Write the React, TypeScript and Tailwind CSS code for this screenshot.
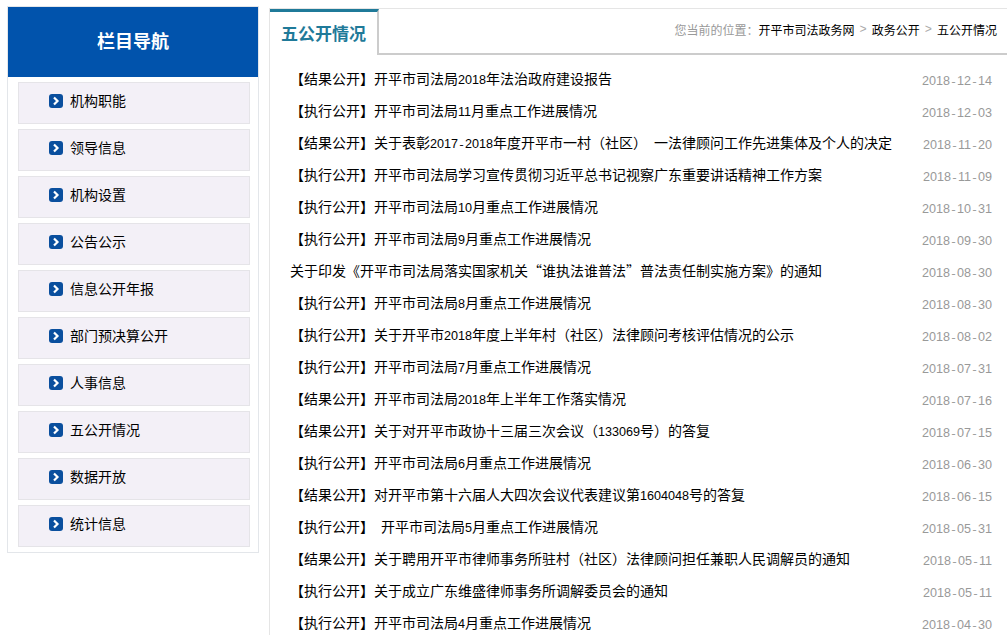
const navItems = ["机构职能", "领导信息", "机构设置", "公告公示", "信息公开年报", "部门预决算公开", "人事信息", "五公开情况", "数据开放", "统计信息"]

const rows = [
  ["【结果公开】开平市司法局2018年法治政府建设报告", "2018-12-14"],
  ["【执行公开】开平市司法局11月重点工作进展情况", "2018-12-03"],
  ["【结果公开】关于表彰2017-2018年度开平市一村（社区） 一法律顾问工作先进集体及个人的决定", "2018-11-20"],
  ["【执行公开】开平市司法局学习宣传贯彻习近平总书记视察广东重要讲话精神工作方案", "2018-11-09"],
  ["【执行公开】开平市司法局10月重点工作进展情况", "2018-10-31"],
  ["【执行公开】开平市司法局9月重点工作进展情况", "2018-09-30"],
  ["关于印发《开平市司法局落实国家机关“谁执法谁普法”普法责任制实施方案》的通知", "2018-08-30"],
  ["【执行公开】开平市司法局8月重点工作进展情况", "2018-08-30"],
  ["【执行公开】关于开平市2018年度上半年村（社区）法律顾问考核评估情况的公示", "2018-08-02"],
  ["【执行公开】开平市司法局7月重点工作进展情况", "2018-07-31"],
  ["【结果公开】开平市司法局2018年上半年工作落实情况", "2018-07-16"],
  ["【结果公开】关于对开平市政协十三届三次会议（133069号）的答复", "2018-07-15"],
  ["【执行公开】开平市司法局6月重点工作进展情况", "2018-06-30"],
  ["【结果公开】对开平市第十六届人大四次会议代表建议第1604048号的答复", "2018-06-15"],
  ["【执行公开】 开平市司法局5月重点工作进展情况", "2018-05-31"],
  ["【结果公开】关于聘用开平市律师事务所驻村（社区）法律顾问担任兼职人民调解员的通知", "2018-05-11"],
  ["【执行公开】关于成立广东维盛律师事务所调解委员会的通知", "2018-05-11"],
  ["【执行公开】开平市司法局4月重点工作进展情况", "2018-04-30"],
]

function ArrowIcon() {
  return (
    <svg width="14" height="14" viewBox="0 0 14 14" className="shrink-0">
      <rect width="14" height="14" rx="3" fill="#0a4f9e" />
      <path d="M5 3.5 L8.5 7 L5 10.5" fill="none" stroke="#fff" strokeWidth="2.2" />
    </svg>
  )
}

// digits, dashes and spaces are 7px wide in the original
function HalfWidth({ text }: { text: string }) {
  return (
    <>
      {text.split(/(\d+|-| +)/).map((part, i) => {
        if (i % 2 === 0) return part
        if (/\d/.test(part)) {
          return (
            <span key={i} className="font-['Liberation_Sans',sans-serif] text-[12.6px]">
              {part}
            </span>
          )
        }
        return (
          <span key={i} className="font-['Liberation_Mono',monospace] text-[11.67px]">
            {part}
          </span>
        )
      })}
    </>
  )
}

export default function App() {
  return (
    <div className="flex h-[635px] w-[1007px] overflow-hidden bg-white pl-[7px] pt-[6px] font-['Noto_Sans_CJK_SC','Liberation_Sans',sans-serif] text-[14px] text-black">
      <aside className="h-[547px] w-[252px] shrink-0 border border-[#e3e6ea] bg-white">
        <div className="flex h-[70px] items-center justify-center bg-[#0153ac] pb-[3px] text-[18px] font-bold text-white">
          栏目导航
        </div>
        <ul className="mt-[5px] flex flex-col gap-[5px] pl-[10px]">
          {navItems.map((item) => (
            <li
              key={item}
              className="flex h-[42px] w-[232px] items-start gap-[7px] border border-[#e5e4e8] bg-[#f3f0f7] pl-[30px] pt-[11px]"
            >
              <ArrowIcon />
              <span className="leading-[12px]">{item}</span>
            </li>
          ))}
        </ul>
      </aside>

      <main className="ml-[10px] mt-[2px] flex-1 border-l border-t border-[#e5e5e5]">
        <div className="flex h-[46px] items-stretch">
          <div className="w-[109px] border-r-2 border-t-[3px] border-r-[#cccccc] border-t-[#1f7a99] pl-[11px] pt-[10px] text-[17px] font-bold leading-[22px] text-[#1f7a99]">
            五公开情况
          </div>
          <div className="flex flex-1 items-start justify-end border-b-2 border-[#cccccc] pr-[10px] pt-[12px] text-[12px] leading-[18px]">
            <span className="text-[#999999]">您当前的位置：</span>
            <span>开平市司法政务网</span>
            <span className="mx-[5px] font-['Liberation_Mono',monospace] text-[#aaaaaa]">&gt;</span>
            <span>政务公开</span>
            <span className="mx-[5px] font-['Liberation_Mono',monospace] text-[#aaaaaa]">&gt;</span>
            <span>五公开情况</span>
          </div>
        </div>
        <ul className="pt-[9px]">
          {rows.map(([title, date], i) => (
            <li key={i} className="flex h-[32px] justify-between pl-[20px] pr-[15px] pt-[5px]">
              <div className="h-[18px] whitespace-pre leading-[18px]">
                <HalfWidth text={title} />
              </div>
              <div className="h-[18px] whitespace-pre pt-[1px] leading-[18px] text-[#999999]">
                <HalfWidth text={date} />
              </div>
            </li>
          ))}
        </ul>
      </main>
    </div>
  )
}
